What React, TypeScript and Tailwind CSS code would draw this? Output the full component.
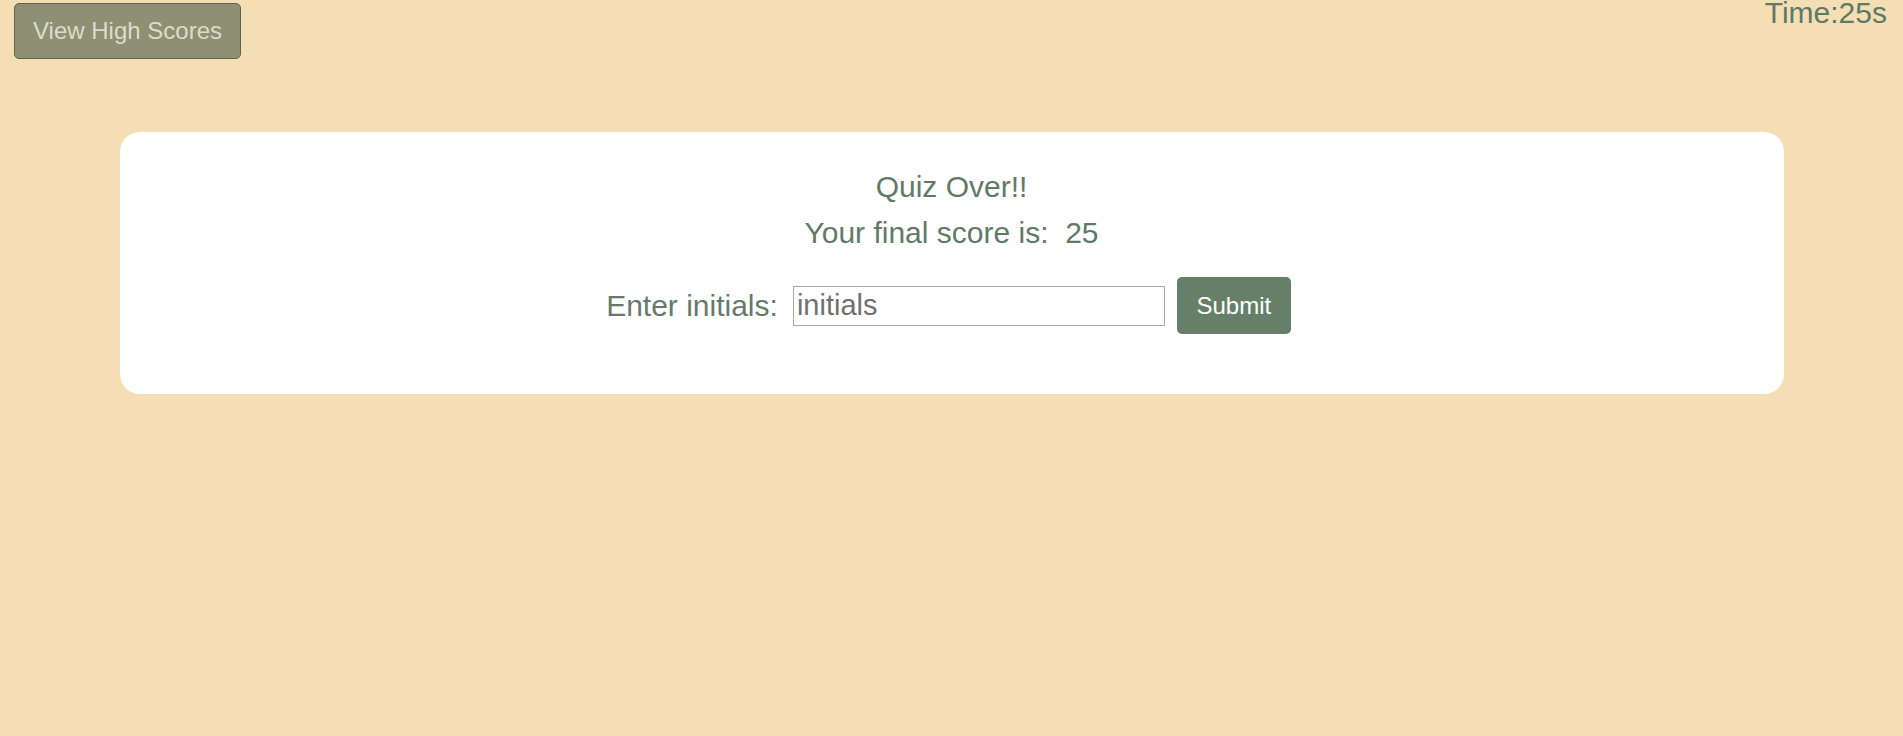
import React from "react";

const QuizOver = ({ score }: { score: number }) => (
  <section className="mx-auto mt-[73px] w-[1664px] rounded-[20px] bg-white pt-[38px] pb-[60px] text-center text-[#617a68]">
    <h2 className="text-[30px] leading-[34px] font-normal">Quiz Over!!</h2>
    <p className="mt-[12px] text-[30px] leading-[34px]">
      Your final score is:&nbsp; {score}
    </p>

    {/* initials form */}
    <form
      className="mt-[27px] flex items-center justify-center pr-[6px]"
      onSubmit={(e) => e.preventDefault()}
    >
      <label htmlFor="initials" className="text-[30px] leading-[34px] text-[#667a6b]">
        Enter initials:
      </label>
      <input
        id="initials"
        type="text"
        placeholder="initials"
        className="ml-[15px] h-[40px] w-[372px] border border-[#a9a9a9] bg-white px-[3px] text-[29px] text-[#6b6b6b] outline-none placeholder:text-[#707070]"
      />
      <button
        type="submit"
        className="ml-[12px] h-[57px] w-[114px] rounded-[5px] bg-[#657f69] text-[24px] text-white"
      >
        Submit
      </button>
    </form>
  </section>
);

const App = () => (
  <div
    className="min-h-screen bg-[#f5deb3]"
    style={{ fontFamily: '"Liberation Sans", Arial, sans-serif' }}
  >
    <header className="flex items-start justify-between">
      <button className="ml-[14px] mt-[3px] h-[56px] rounded-[5px] border border-[#5f6259] bg-[#8e9073] px-[18px] text-[24px] text-[#dcdcca]">
        View High Scores
      </button>
      <div className="mr-[16px] -mt-[2px] text-[30px] leading-none text-[#5e7a67]">Time:25s</div>
    </header>

    <QuizOver score={25} />
  </div>
);

export default App;
